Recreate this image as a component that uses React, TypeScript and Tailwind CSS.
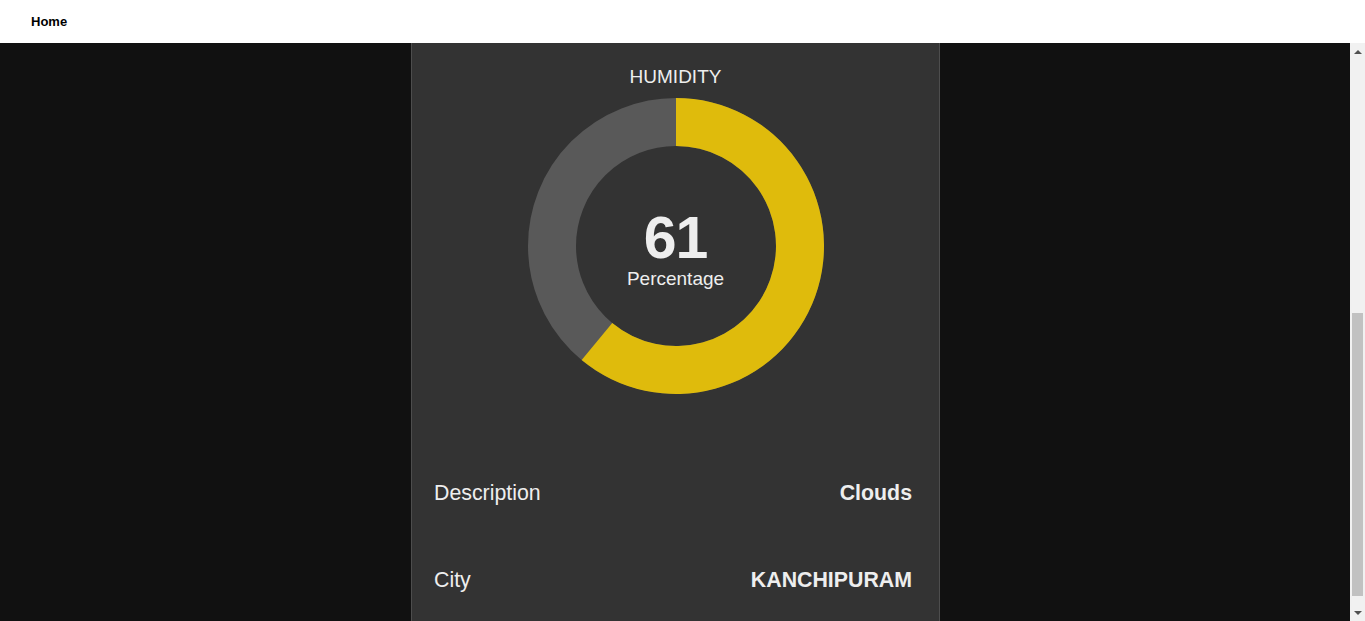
import React from "react";

function Donut({ value }: { value: number }) {
  const cx = 150, cy = 150, R = 148, r = 100;
  const a = (value / 100) * 2 * Math.PI;
  const ox = cx + R * Math.sin(a), oy = cy - R * Math.cos(a);
  const ix = cx + r * Math.sin(a), iy = cy - r * Math.cos(a);
  const large = value > 50 ? 1 : 0;
  const yellow = `M ${cx} ${cy - R} A ${R} ${R} 0 ${large} 1 ${ox} ${oy} L ${ix} ${iy} A ${r} ${r} 0 ${large} 0 ${cx} ${cy - r} Z`;
  return (
    <div className="relative w-[300px] h-[300px]">
      <svg width="300" height="300" viewBox="0 0 300 300" className="absolute inset-0">
        <circle cx={cx} cy={cy} r={(R + r) / 2} fill="none" stroke="#595959" strokeWidth={R - r} />
        <path d={yellow} fill="#dfbb0c" />
      </svg>
      <div className="absolute inset-0 flex flex-col items-center pt-[114px]">
        <div className="text-[59px] font-bold leading-[0.95] tracking-[-1px] text-[#eeeeee]">{value}</div>
        <div className="text-[19px] leading-none text-[#eeeeee] mt-[3px]">Percentage</div>
      </div>
    </div>
  );
}

export default function App() {
  return (
    <div
      className="h-[621px] w-full overflow-hidden flex flex-col bg-[#111111]"
      style={{ fontFamily: '"Liberation Sans", Arial, sans-serif' }}
    >
      <header className="h-[43px] bg-white flex items-center pl-[31px] shrink-0">
        <span className="text-[13px] font-bold text-black">Home</span>
      </header>
      <div className="flex flex-1 min-h-0">
        <main className="flex-1 flex justify-center pl-[1px]">
          <div className="w-[529px] bg-[#333333] border-x border-[#4d4d4d] flex flex-col">
            <div className="pt-[24px] text-center text-[19px] leading-none text-[#eeeeee]">HUMIDITY</div>
            <div className="flex justify-center mt-[10px]">
              <Donut value={61} />
            </div>
            <div className="flex justify-between items-center pl-[22px] pr-[27px] mt-[87px] text-[21.33px] leading-none text-[#eeeeee]">
              <span>Description</span>
              <span className="font-bold">Clouds</span>
            </div>
            <div className="flex justify-between items-center pl-[22px] pr-[27px] mt-[66px] text-[21.33px] leading-none text-[#eeeeee]">
              <span>City</span>
              <span className="font-bold">KANCHIPURAM</span>
            </div>
          </div>
        </main>
        <div className="w-[15px] bg-[#f1f1f1] flex flex-col items-center">
          <div className="h-[17px] flex items-center justify-center">
            <div className="w-0 h-0 border-l-[4px] border-r-[4px] border-b-[4px] border-l-transparent border-r-transparent border-b-[#505050]" />
          </div>
          <div className="flex-1 w-full flex flex-col justify-end pb-[8px]">
            <div className="mx-[2px] h-[283px] bg-[#c1c1c1]" />
          </div>
          <div className="h-[17px] flex items-center justify-center">
            <div className="w-0 h-0 border-l-[4px] border-r-[4px] border-t-[4px] border-l-transparent border-r-transparent border-t-[#505050]" />
          </div>
        </div>
      </div>
    </div>
  );
}
